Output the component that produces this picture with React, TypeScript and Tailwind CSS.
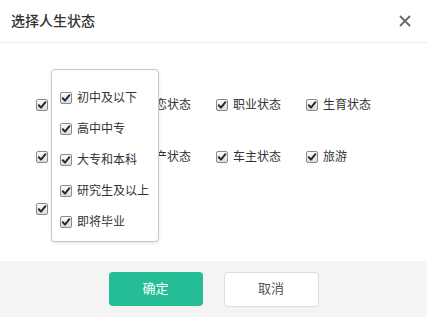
import React from "react";

const Check = () => (
  <span className="relative inline-flex h-[12px] w-[12px] shrink-0 items-center justify-center rounded-[2px] border border-[#8a8a8a] bg-gradient-to-b from-[#fdfdfd] to-[#dcdcdc]">
    <svg width="10" height="10" viewBox="0 0 10 10">
      <path d="M1.8 5.2 L4 7.6 L8.4 2.2" fill="none" stroke="#2a2a2a" strokeWidth="2" strokeLinecap="round" strokeLinejoin="round" />
    </svg>
  </span>
);

const Item = ({ label }: { label: string }) => (
  <div className="flex items-center gap-[5px]">
    <Check />
    <span className="text-[12px] text-[#333] whitespace-nowrap">{label}</span>
  </div>
);

export default function App() {
  const rows = [
    ["学历状态", "婚恋状态", "职业状态", "生育状态"],
    ["收入状态", "房产状态", "车主状态", "旅游"],
    ["其他状态"],
  ];
  const pop = ["初中及以下", "高中中专", "大专和本科", "研究生及以上", "即将毕业"];
  return (
    <div
      className="flex h-[317px] w-[427px] flex-col bg-white"
      style={{ fontFamily: '"Liberation Sans", "Noto Sans CJK SC", sans-serif' }}
    >
      <div className="flex h-[43px] shrink-0 items-center justify-between border-b border-[#ececec] pl-[11px] pr-[16px]">
        <span className="text-[14px] font-medium text-[#333]">选择人生状态</span>
        <svg width="12" height="12" viewBox="0 0 12 12">
          <path d="M1.5 1.5 L10.5 10.5 M10.5 1.5 L1.5 10.5" stroke="#666" strokeWidth="1.8" strokeLinecap="round" />
        </svg>
      </div>
      <div className="relative h-[218px] shrink-0 pl-[36px] pt-[36px]">
        {rows.map((r, i) => (
          <div key={i} className="grid h-[52px] grid-cols-[90px_90px_90px_90px] items-center">
            {r.map((l) => (
              <Item key={l} label={l} />
            ))}
          </div>
        ))}
        <div className="absolute left-[51px] top-[26px] h-[173px] w-[108px] rounded-[4px] border border-[#c8c8c8] bg-white pl-[8px] pt-[12px] shadow-[0_1px_3px_rgba(0,0,0,0.12)]">
          {pop.map((l) => (
            <div key={l} className="flex h-[31px] items-center gap-[5px]">
              <Check />
              <span className="text-[12px] text-[#333] whitespace-nowrap">{l}</span>
            </div>
          ))}
        </div>
      </div>
      <div className="flex flex-1 items-center justify-center gap-[21px] bg-[#f4f4f4]">
        <button className="h-[34px] w-[94px] rounded-[4px] bg-[#25bd95] text-[13px] text-white">确定</button>
        <button className="h-[35px] w-[95px] rounded-[4px] border border-[#dcdcdc] bg-white text-[13px] text-[#555]">取消</button>
      </div>
    </div>
  );
}
